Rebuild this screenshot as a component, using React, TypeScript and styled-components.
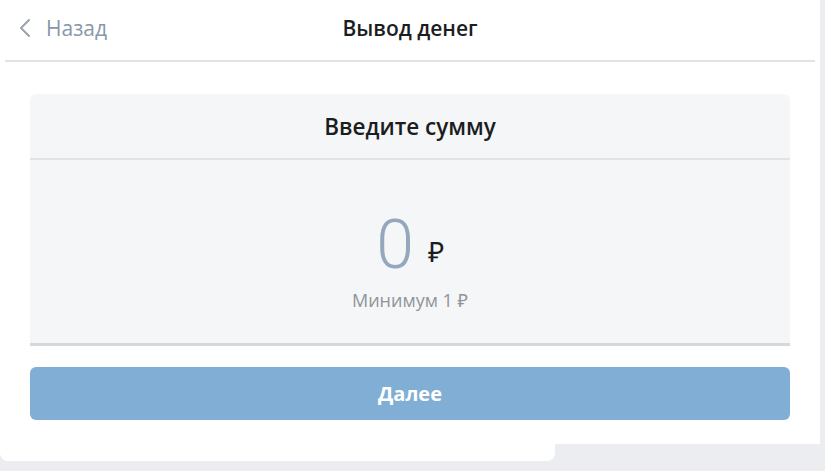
import { FC } from 'react';
import styled, { createGlobalStyle } from 'styled-components';

const colors = {
  page: '#ebedf0',
  white: '#ffffff',
  card: '#f5f6f8',
  line: '#e1e3e6',
  text: '#1c1d1f',
  muted: '#909499',
  back: '#8797aa',
  amount: '#94a7bd',
  button: '#81aed5',
};

const GlobalStyle = createGlobalStyle`
  html, body {
    margin: 0;
    padding: 0;
    background: ${colors.page};
    font-family: 'Open Sans', 'Noto Sans', sans-serif;
  }
`;

const Back: FC = () => (
  <BackLink>
    <svg width="12" height="20" viewBox="0 0 12 20" fill="none">
      <path d="M10 2 L2 10 L10 18" stroke="#99a2ad" strokeWidth="2" strokeLinecap="round" strokeLinejoin="round" />
    </svg>
    <span>Назад</span>
  </BackLink>
);

export default function App() {
  return (
    <>
      <GlobalStyle />
      <Panel>
        <Header>
          <Back />
          <Title>Вывод денег</Title>
        </Header>
        <Card>
          <CardHead>Введите сумму</CardHead>
          <CardBody>
            <AmountRow>
              <Amount>0</Amount>
              <Currency>₽</Currency>
            </AmountRow>
            <Hint>Минимум 1 ₽</Hint>
          </CardBody>
        </Card>
        <NextButton type="button">Далее</NextButton>
      </Panel>
      <PanelTail />
    </>
  );
}

const Panel = styled.div`
  width: 820px;
  background: ${colors.white};
  padding-bottom: 24px;
`;

const PanelTail = styled.div`
  width: 555px;
  height: 17px;
  background: ${colors.white};
  border-radius: 0 0 8px 8px;
`;

const Header = styled.div`
  position: relative;
  display: flex;
  align-items: center;
  justify-content: center;
  height: 60px;
  margin: 0 5px;
  border-bottom: 2px solid ${colors.line};
`;

const BackLink = styled.div`
  position: absolute;
  left: 14px;
  top: 0;
  bottom: 0;
  display: flex;
  align-items: center;
  gap: 15px;
  color: ${colors.back};
  font-size: 21px;
  padding-bottom: 4px;
`;

const Title = styled.div`
  font-size: 21px;
  font-weight: 600;
  color: ${colors.text};
  padding-bottom: 4px;
`;

const Card = styled.div`
  margin: 32px 30px 0;
  background: ${colors.card};
  border-radius: 6px 6px 0 0;
  border-bottom: 3px solid #d7d8db;
`;

const CardHead = styled.div`
  display: flex;
  align-items: center;
  justify-content: center;
  height: 64px;
  border-bottom: 2px solid ${colors.line};
  font-size: 22.5px;
  font-weight: 600;
  color: ${colors.text};
`;

const CardBody = styled.div`
  display: flex;
  flex-direction: column;
  align-items: center;
  height: 183px;
  padding-top: 50px;
  box-sizing: border-box;
`;

const AmountRow = styled.div`
  display: flex;
  align-items: baseline;
  gap: 14px;
`;

const Amount = styled.span`
  font-family: Roboto, 'Open Sans', sans-serif;
  font-weight: 300;
  font-size: 68px;
  line-height: 70px;
  color: ${colors.amount};
`;

const Currency = styled.span`
  font-family: 'Open Sans', sans-serif;
  font-size: 28px;
  color: ${colors.text};
  transform: translateY(-6px);
`;

const Hint = styled.div`
  margin-top: 8px;
  font-size: 18px;
  color: ${colors.muted};
`;

const NextButton = styled.button`
  display: block;
  width: 760px;
  height: 53px;
  margin: 21px 30px 0;
  border: none;
  border-radius: 6px;
  background: ${colors.button};
  color: ${colors.white};
  font-family: 'Open Sans', sans-serif;
  font-size: 20px;
  font-weight: 700;
`;
